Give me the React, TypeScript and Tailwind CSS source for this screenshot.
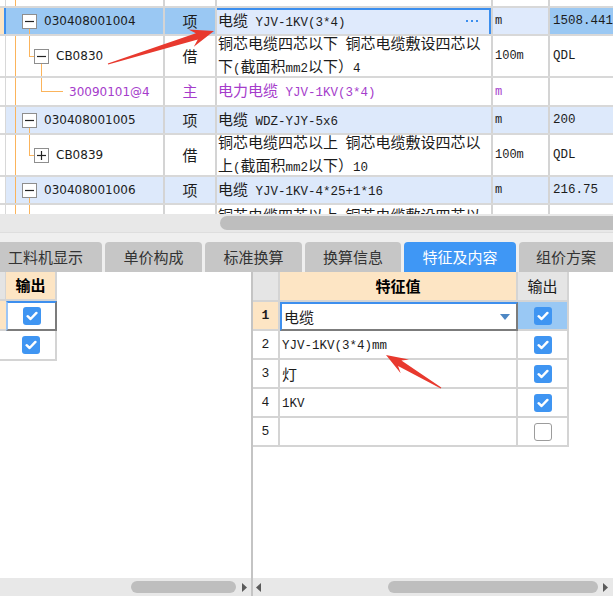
import React from 'react';

const CN = "font-['Noto_Sans_CJK_SC',sans-serif]";
const MONO = "font-['Liberation_Mono','Noto_Sans_CJK_SC',monospace]";
const CODE = "font-['DejaVu_Sans','Noto_Sans_CJK_SC',sans-serif]";

const CJK_RUN = /([\u2E80-\u9FFF\u3000-\u303F\uFF00-\uFFEF]+)/;

// chinese runs in the CJK face, latin runs in the narrow mono face
function Mixed({ text }: { text: string }) {
  return (
    <>
      {text
        .split(CJK_RUN)
        .filter(Boolean)
        .map((part, i) =>
          CJK_RUN.test(part) ? (
            <span key={i} className={`${CN} text-[15px]`}>
              {part}
            </span>
          ) : (
            <span key={i} className={`${MONO} text-[12.5px] whitespace-pre`}>
              {part}
            </span>
          ),
        )}
    </>
  );
}

function TreeBox({ sign }: { sign: '-' | '+' }) {
  return (
    <span className="relative z-10 flex h-[15px] w-[15px] shrink-0 items-center justify-center border border-[#8e8e8e] bg-white">
      <svg width="9" height="9" viewBox="0 0 9 9">
        <line x1="0" y1="4.5" x2="9" y2="4.5" stroke="#222" strokeWidth="1.2" />
        {sign === '+' && <line x1="4.5" y1="0" x2="4.5" y2="9" stroke="#222" strokeWidth="1.2" />}
      </svg>
    </span>
  );
}

function Check({ on }: { on: boolean }) {
  if (!on) return <span className="h-[18px] w-[18px] rounded-[3px] border border-[#9c9c9c] bg-white" />;
  return (
    <span className="flex h-[18px] w-[18px] items-center justify-center rounded-[3px] bg-[#3f95f2]">
      <svg width="12" height="10" viewBox="0 0 12 10">
        <path d="M1.6 5.2 L4.6 8 L10.4 1.9" stroke="white" strokeWidth="2.4" fill="none" strokeLinecap="round" strokeLinejoin="round" />
      </svg>
    </span>
  );
}

type Tone = 'sel' | 'blue' | 'white';

interface TopRow {
  hc: string;
  tone: Tone;
  code?: string;
  pl?: string;
  box?: '-' | '+';
  purple?: boolean;
  type?: string;
  name: string[];
  unit?: string;
  qty?: string;
  lines: [number, number, number, number][];
  cut?: boolean;
}

const ROWS: TopRow[] = [
  { hc: 'h-[8px]', tone: 'white', name: [], lines: [[9, 0, 1, 6]] },
  {
    hc: 'h-[28px]', tone: 'sel', code: '030408001004', pl: 'pl-[16px]', box: '-', type: '项',
    name: ['电缆 YJV-1KV(3*4)'], unit: 'm', qty: '1508.441', lines: [[23, 20, 1, 6]],
  },
  {
    hc: 'h-[42px]', tone: 'white', code: 'CB0830', pl: 'pl-[28px]', box: '-', type: '借',
    name: ['铜芯电缆四芯以下 铜芯电缆敷设四芯以', '下(截面积mm2以下）4'], unit: '100m', qty: 'QDL',
    lines: [[9, 0, 1, 40], [23, 0, 1, 20], [23, 20, 5, 1], [35, 27, 1, 13]],
  },
  {
    hc: 'h-[29px]', tone: 'white', code: '30090101@4', pl: 'pl-[63px]', purple: true, type: '主',
    name: ['电力电缆 YJV-1KV(3*4)'], unit: 'm', qty: '',
    lines: [[9, 0, 1, 27], [35, 0, 1, 13], [35, 13, 22, 1]],
  },
  {
    hc: 'h-[28px]', tone: 'blue', code: '030408001005', pl: 'pl-[16px]', box: '-', type: '项',
    name: ['电缆 WDZ-YJY-5x6'], unit: 'm', qty: '200', lines: [[9, 0, 1, 26], [23, 20, 1, 6]],
  },
  {
    hc: 'h-[42px]', tone: 'white', code: 'CB0839', pl: 'pl-[28px]', box: '+', type: '借',
    name: ['铜芯电缆四芯以上 铜芯电缆敷设四芯以', '上(截面积mm2以下）10'], unit: '100m', qty: 'QDL',
    lines: [[9, 0, 1, 40], [23, 0, 1, 20], [23, 20, 5, 1]],
  },
  {
    hc: 'h-[28px]', tone: 'blue', code: '030408001006', pl: 'pl-[16px]', box: '-', type: '项',
    name: ['电缆 YJV-1KV-4*25+1*16'], unit: 'm', qty: '216.75', lines: [[9, 0, 1, 26], [23, 20, 1, 6]],
  },
  {
    hc: 'h-[42px]', tone: 'white', name: ['铜芯电缆四芯以上 铜芯电缆敷设四芯以', '上(截面积mm2以下）4'],
    lines: [[9, 0, 1, 40], [23, 0, 1, 40]], cut: true,
  },
];

const toneBg: Record<Tone, string> = {
  sel: 'bg-[#9ac8f3]',
  blue: 'bg-[#dde9fb]',
  white: 'bg-white',
};

function Row({ r }: { r: TopRow }) {
  const ink = r.purple ? 'text-[#a53ccb]' : 'text-[#1c1c1c]';
  const sel = r.tone === 'sel';
  return (
    <div className={`flex shrink-0 border-b-2 border-[#d8d8d8] ${r.hc} ${toneBg[r.tone]} ${ink}`}>
      <div className={`w-[6px] shrink-0 ${sel ? 'border-r-2 border-[#3d8fee] bg-[#fde5c4]' : 'border-r border-[#d8d8d8] bg-white'}`} />
      <div className={`relative flex w-[159px] shrink-0 items-center border-r-2 border-[#d4d4d4] ${r.pl ?? ''}`}>
        {r.lines.map(([l, t, w, h], i) => (
          <span
            key={i}
            className="absolute bg-[#fbb45c]"
            style={{ left: l, top: t, width: w, height: h }}
          />
        ))}
        {r.box && <TreeBox sign={r.box} />}
        {r.code && (
          <span className={`${CODE} text-[12px] ${r.box ? 'ml-[7px]' : ''}`}>{r.code}</span>
        )}
      </div>
      <div className={`flex w-[52px] shrink-0 items-center justify-center border-r-2 border-[#d4d4d4] ${CN} text-[15px]`}>
        {r.type}
      </div>
      <div
        className={`relative flex w-[276px] shrink-0 overflow-hidden border-r-2 border-[#d4d4d4] px-[1px] leading-[20px] ${
          r.cut ? 'flex-col justify-start' : 'items-center'
        } ${sel ? 'bg-[#dfeafc]' : ''}`}
      >
        {sel && <span className="absolute -left-[2px] top-0 -bottom-[2px] right-0 border-2 border-[#3b8eee]" />}
        <div className="flex flex-col">
          {r.name.map((line) => (
            <div key={line} className="whitespace-nowrap">
              <Mixed text={line} />
            </div>
          ))}
        </div>
        {sel && (
          <span className="ml-auto mr-[12px] flex gap-[3px]">
            <span className="h-[2px] w-[2px] bg-[#3b8eee]" />
            <span className="h-[2px] w-[2px] bg-[#3b8eee]" />
            <span className="h-[2px] w-[2px] bg-[#3b8eee]" />
          </span>
        )}
      </div>
      <div className={`flex w-[57px] shrink-0 items-center border-r-2 border-[#d4d4d4] pl-[2px] ${MONO} text-[12px] ${sel ? 'bg-[#dfeafc]' : ''}`}>
        {r.unit}
      </div>
      <div className={`flex flex-1 items-center pl-[3px] ${MONO} text-[12.5px]`}>{r.qty}</div>
    </div>
  );
}

function TriRight() {
  return (
    <svg width="5" height="9" viewBox="0 0 5 9">
      <path d="M0 0 L5 4.5 L0 9 Z" fill="#5a5a5a" />
    </svg>
  );
}

function TriLeft() {
  return (
    <svg width="5" height="9" viewBox="0 0 5 9">
      <path d="M5 0 L0 4.5 L5 9 Z" fill="#5a5a5a" />
    </svg>
  );
}

const TABS = [
  { label: '工料机显示', cls: 'w-[102px] justify-start pl-[8px] rounded-tl-none' },
  { label: '单价构成', cls: 'w-[97px] justify-center' },
  { label: '标准换算', cls: 'w-[97px] justify-center' },
  { label: '换算信息', cls: 'w-[96px] justify-center' },
  { label: '特征及内容', cls: 'w-[112px] justify-center', active: true },
  { label: '组价方案', cls: 'flex-1 justify-center rounded-tr-none' },
];

const FEATURES = [
  { n: '1', v: '电缆', on: true },
  { n: '2', v: 'YJV-1KV(3*4)mm', on: true },
  { n: '3', v: '灯', on: true },
  { n: '4', v: '1KV', on: true },
  { n: '5', v: '', on: false },
];

function arrowPoints(tx: number, ty: number, hx: number, hy: number, head: number, wing: number) {
  const dx = hx - tx;
  const dy = hy - ty;
  const len = Math.hypot(dx, dy);
  const ux = dx / len;
  const uy = dy / len;
  const px = -uy;
  const py = ux;
  const neck = 3.2;
  const tail = 0.6;
  const back = head - 6;
  const pt = (bx: number, by: number, s: number) => `${(bx + px * s).toFixed(1)},${(by + py * s).toFixed(1)}`;
  const nx = hx - ux * back;
  const ny = hy - uy * back;
  const wx = hx - ux * head;
  const wy = hy - uy * head;
  return [
    pt(tx, ty, tail),
    pt(nx, ny, neck),
    pt(wx, wy, wing),
    `${hx},${hy}`,
    pt(wx, wy, -wing),
    pt(nx, ny, -neck),
    pt(tx, ty, -tail),
  ].join(' ');
}

export default function App() {
  return (
    <div className="relative flex h-[596px] w-[613px] flex-col overflow-hidden bg-white text-[#1c1c1c]">
      {/* upper list */}
      <div className="flex h-[214px] shrink-0 flex-col overflow-hidden">
        {ROWS.map((r, i) => (
          <Row key={i} r={r} />
        ))}
      </div>
      <div className="flex h-[18px] shrink-0 items-center bg-[#e8e8e8]">
        <div className="ml-[220px] h-[14px] flex-1 rounded-l-full bg-[#bebebe]" />
      </div>

      {/* tabs */}
      <div className="flex h-[40px] shrink-0 items-end gap-[3px] border-t border-[#dedede] bg-[#efefef]">
        {TABS.map((t) => (
          <div
            key={t.label}
            className={`flex h-[30px] items-center rounded-t-[4px] ${CN} text-[15px] leading-[20px] ${t.cls} ${
              t.active ? 'bg-[#3f97f5] text-white' : 'bg-[#c6c6c6] text-[#333]'
            }`}
          >
            {t.label}
          </div>
        ))}
      </div>

      {/* lower panels */}
      <div className="flex flex-1">
        <div className="flex w-[253px] shrink-0 flex-col border-r-2 border-[#c4c4c4]">
          <div className="flex h-[29px]">
            <div className="w-[6px] border-r border-b-2 border-[#d4d4d4] bg-[#e4e4e4]" />
            <div className={`flex w-[51px] items-center justify-center border-r-2 border-b-2 border-[#d4d4d4] bg-[#fde5c4] ${CN} text-[15px] font-bold text-black`}>
              输出
            </div>
          </div>
          <div className="flex h-[30px]">
            <div className="w-[6px] border-b-2 border-[#d4d4d4] bg-[#fde5c4]" />
            <div className="flex w-[51px] items-center justify-center border-t-2 border-l-2 border-r-2 border-b-2 border-t-[#3d8fee] border-l-[#9cc5f5] border-r-[#7c7c7c] border-b-[#7c7c7c]">
              <Check on />
            </div>
          </div>
          <div className="flex h-[30px]">
            <div className="w-[6px] border-b-2 border-[#d4d4d4]" />
            <div className="flex w-[51px] items-center justify-center border-r-2 border-b-2 border-[#d4d4d4]">
              <Check on />
            </div>
          </div>
          <div className="flex-1" />
          <div className="flex h-[18px] items-center bg-[#e8e8e8] pl-[131px]">
            <div className="h-[12px] w-[105px] rounded-full bg-[#bebebe]" />
            <span className="ml-[6px]">
              <TriRight />
            </span>
          </div>
        </div>

        <div className="flex flex-1 flex-col">
          <div className="flex h-[30px] w-[316px]">
            <div className="w-[27px] border-r-2 border-b-2 border-[#d4d4d4] bg-[#e5e5e5]" />
            <div className={`flex w-[238px] items-center justify-center border-r-2 border-b-2 border-[#d4d4d4] bg-[#fde5c4] ${CN} text-[15px] font-bold text-black`}>
              特征值
            </div>
            <div className={`flex w-[51px] items-center justify-center border-r-2 border-b-2 border-[#d4d4d4] bg-[#e5e5e5] ${CN} text-[15px]`}>
              输出
            </div>
          </div>
          {FEATURES.map((f, i) => {
            const first = i === 0;
            return (
              <div key={f.n} className="flex h-[29px] w-[316px]">
                <div
                  className={`flex w-[27px] items-center justify-center border-r-2 border-b-2 border-[#d4d4d4] ${MONO} text-[13px] ${
                    first ? 'bg-[#fde5c4] font-bold' : ''
                  }`}
                >
                  {f.n}
                </div>
                <div
                  className={`flex w-[238px] items-center pl-[2px] leading-[20px] ${
                    first
                      ? 'border-2 border-t-[#3d8fee] border-l-[#3d8fee] border-r-[#7c7c7c] border-b-[#7c7c7c]'
                      : 'border-r-2 border-b-2 border-[#d4d4d4]'
                  }`}
                >
                  <span className="whitespace-nowrap">
                    <Mixed text={f.v} />
                  </span>
                  {first && (
                    <svg className="ml-auto mr-[6px]" width="10" height="6" viewBox="0 0 10 6">
                      <path d="M0 0 L10 0 L5 6 Z" fill="#4d87c4" />
                    </svg>
                  )}
                </div>
                <div
                  className={`flex w-[51px] items-center justify-center border-r-2 border-b-2 border-[#d4d4d4] ${
                    first ? 'bg-[#99c8f4]' : ''
                  }`}
                >
                  <Check on={f.on} />
                </div>
              </div>
            );
          })}
          <div className="flex-1" />
          <div className="flex h-[18px] items-center bg-[#e8e8e8]">
            <span className="ml-[3px]">
              <TriLeft />
            </span>
            <div className="ml-[127px] h-[12px] w-[210px] rounded-full bg-[#bebebe]" />
            <span className="ml-[5px]">
              <TriRight />
            </span>
          </div>
        </div>
      </div>

      {/* red annotation arrows */}
      <svg className="pointer-events-none absolute left-0 top-0" width="613" height="596">
        <polygon points={arrowPoints(108, 64, 214, 31, 24, 9)} fill="#e8392e" />
        <polygon points={arrowPoints(441, 388, 386, 355, 22, 8)} fill="#e8392e" />
      </svg>
    </div>
  );
}
